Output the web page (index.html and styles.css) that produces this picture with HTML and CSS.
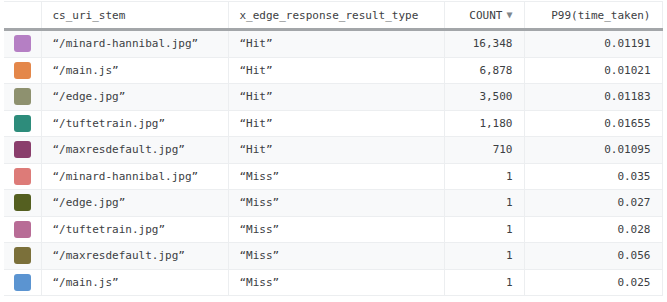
FILE: index.html
```html
<!DOCTYPE html>
<html>
<head>
<meta charset="utf-8">
<link rel="stylesheet" href="styles.css">
</head>
<body>
<table class="grid">
  <colgroup>
    <col class="c-sw"><col class="c-uri"><col class="c-type"><col class="c-count"><col class="c-p99">
  </colgroup>
  <thead>
    <tr>
      <th></th>
      <th>cs_uri_stem</th>
      <th>x_edge_response_result_type</th>
      <th class="num">COUNT<span class="sort">▼</span></th>
      <th class="num">P99(time_taken)</th>
    </tr>
  </thead>
  <tbody>
    <tr><td><span class="sw s1"></span></td><td>“/minard-hannibal.jpg”</td><td>“Hit”</td><td class="num">16,348</td><td class="num">0.01191</td></tr>
    <tr><td><span class="sw s2"></span></td><td>“/main.js”</td><td>“Hit”</td><td class="num">6,878</td><td class="num">0.01021</td></tr>
    <tr><td><span class="sw s3"></span></td><td>“/edge.jpg”</td><td>“Hit”</td><td class="num">3,500</td><td class="num">0.01183</td></tr>
    <tr><td><span class="sw s4"></span></td><td>“/tuftetrain.jpg”</td><td>“Hit”</td><td class="num">1,180</td><td class="num">0.01655</td></tr>
    <tr><td><span class="sw s5"></span></td><td>“/maxresdefault.jpg”</td><td>“Hit”</td><td class="num">710</td><td class="num">0.01095</td></tr>
    <tr><td><span class="sw s6"></span></td><td>“/minard-hannibal.jpg”</td><td>“Miss”</td><td class="num">1</td><td class="num">0.035</td></tr>
    <tr><td><span class="sw s7"></span></td><td>“/edge.jpg”</td><td>“Miss”</td><td class="num">1</td><td class="num">0.027</td></tr>
    <tr><td><span class="sw s8"></span></td><td>“/tuftetrain.jpg”</td><td>“Miss”</td><td class="num">1</td><td class="num">0.028</td></tr>
    <tr><td><span class="sw s9"></span></td><td>“/maxresdefault.jpg”</td><td>“Miss”</td><td class="num">1</td><td class="num">0.056</td></tr>
    <tr><td><span class="sw s10"></span></td><td>“/main.js”</td><td>“Miss”</td><td class="num">1</td><td class="num">0.025</td></tr>
  </tbody>
</table>
</body>
</html>
```
FILE: styles.css
```css
html, body {
  margin: 0;
  padding: 0;
  background: #ffffff;
}
body {
  padding: 1px 0 0 4px;
  font-family: "DejaVu Sans Mono", "Liberation Mono", monospace;
  font-size: 11px;
  color: #3c4043;
}
.grid {
  border-collapse: collapse;
  table-layout: fixed;
  width: 658px;
}
.c-sw { width: 37px; }
.c-uri { width: 187px; }
.c-type { width: 216px; }
.c-count { width: 80px; }
.c-p99 { width: 138px; }

.grid th, .grid td {
  padding: 0 11px;
  text-align: left;
  white-space: nowrap;
  border-left: 1px solid #eceef0;
  border-right: 1px solid #eceef0;
}
.grid th:first-child, .grid td:first-child {
  border-left: none;
}
.grid thead th {
  height: 26px;
  font-weight: normal;
  color: #3c4043;
  border-top: 1px solid #eceef0;
  border-bottom: 3px solid #a3a6a9;
}
.grid td {
  height: 25.5px;
  border-bottom: 1px solid #eceef0;
}
.grid tbody tr:nth-child(odd) td {
  background: #f8f9fa;
}
.grid .num {
  text-align: right;
}
.sort {
  font-size: 10px;
  color: #80868b;
  margin-left: 4px;
  position: relative;
  top: -1px;
}
.grid td:first-child {
  padding: 0 0 0 10px;
}
.sw {
  display: block;
  width: 17px;
  height: 17px;
  border-radius: 3px;
}
.s1 { background: #b57fc4; }
.s2 { background: #e4874a; }
.s3 { background: #8e916f; }
.s4 { background: #2d8c7b; }
.s5 { background: #8a3e6c; }
.s6 { background: #dd7b78; }
.s7 { background: #545f20; }
.s8 { background: #b86c96; }
.s9 { background: #7b703a; }
.s10 { background: #5b94d1; }
```
